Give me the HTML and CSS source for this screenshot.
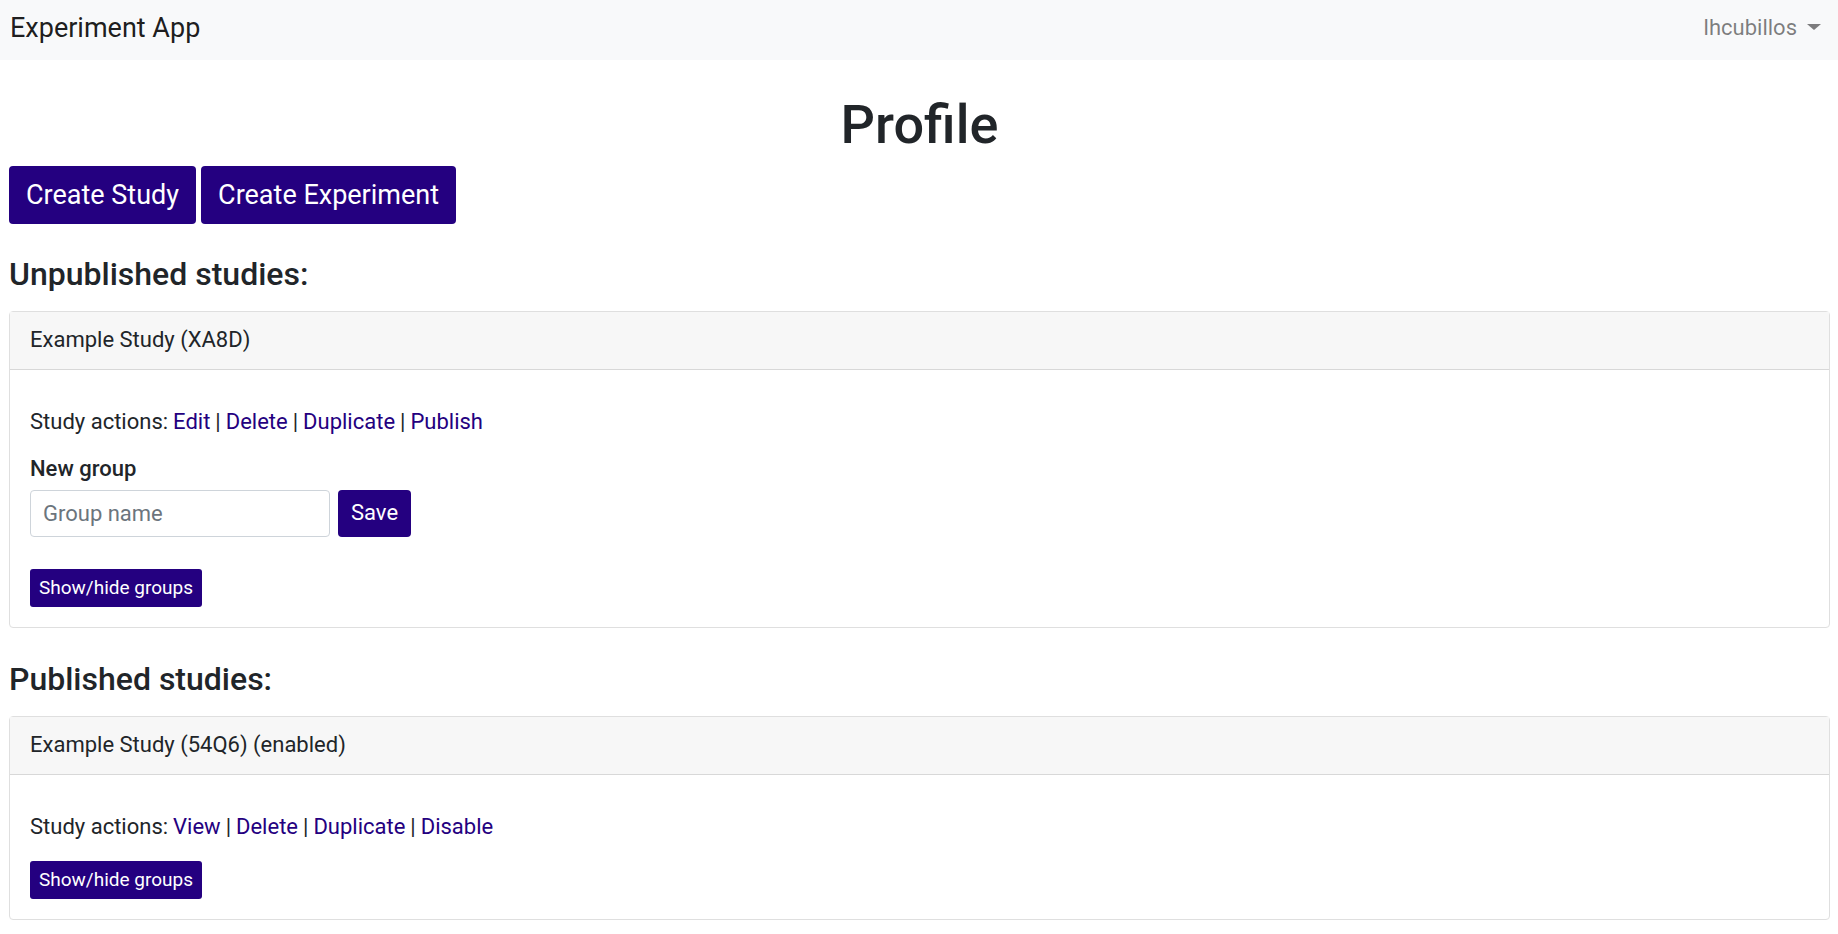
FILE: index.html
```html
<!DOCTYPE html>
<html lang="en">
<head>
<meta charset="utf-8">
<title>Experiment App</title>
<link rel="stylesheet" href="styles.css">
</head>
<body>
<nav class="navbar">
  <a class="brand" href="#">Experiment App</a>
  <button class="user-menu" type="button">lhcubillos<span class="caret"></span></button>
</nav>
<main class="page">
  <h1 class="title">Profile</h1>
  <div class="toolbar">
    <button class="btn btn-lg" type="button">Create Study</button>
    <button class="btn btn-lg" type="button">Create Experiment</button>
  </div>

  <section class="section">
    <h2 class="section-title">Unpublished studies:</h2>
    <article class="card">
      <header class="card-header">Example Study (XA8D)</header>
      <div class="card-body">
        <div class="actions">
          <span>Study actions:</span>
          <a class="link" href="#">Edit</a><span class="bar">|</span>
          <button class="link" type="button">Delete</button><span class="bar">|</span>
          <button class="link" type="button">Duplicate</button><span class="bar">|</span>
          <button class="link" type="button">Publish</button>
        </div>
        <form class="group-form">
          <label class="label" for="group-name">New group</label>
          <div class="field-row">
            <input class="input" id="group-name" type="text" placeholder="Group name">
            <button class="btn" type="button">Save</button>
          </div>
        </form>
        <button class="btn btn-sm" type="button">Show/hide groups</button>
      </div>
    </article>
  </section>

  <section class="section">
    <h2 class="section-title">Published studies:</h2>
    <article class="card">
      <header class="card-header">Example Study (54Q6) (enabled)</header>
      <div class="card-body">
        <div class="actions">
          <span>Study actions:</span>
          <a class="link" href="#">View</a><span class="bar">|</span>
          <button class="link" type="button">Delete</button><span class="bar">|</span>
          <button class="link" type="button">Duplicate</button><span class="bar">|</span>
          <button class="link" type="button">Disable</button>
        </div>
        <button class="btn btn-sm" type="button">Show/hide groups</button>
      </div>
    </article>
  </section>
</main>
</body>
</html>
```
FILE: styles.css
```css
* { box-sizing: border-box; }

body {
  margin: 0;
  background: #fff;
  color: #212529;
  font-family: Roboto, "Liberation Sans", sans-serif;
  font-size: 22px;
  line-height: 32px;
}

button, input { font: inherit; }
button { cursor: pointer; }

.navbar {
  display: flex;
  align-items: center;
  justify-content: space-between;
  min-height: 60px;
  padding: 0 17px 4px 10px;
  background: #f8f9fa;
}

.brand {
  color: rgba(0, 0, 0, .9);
  font-size: 27px;
  text-decoration: none;
}

.user-menu {
  display: flex;
  align-items: center;
  gap: 10px;
  padding: 0;
  border: 0;
  background: none;
  color: rgba(0, 0, 0, .5);
}

.caret {
  margin-bottom: 3px;
  border: 7px solid transparent;
  border-top: 6px solid currentColor;
  border-bottom: 0;
}

.page { padding: 33px 8px 0 9px; }

.title {
  margin: 0 0 9px;
  font-size: 54px;
  font-weight: 500;
  line-height: 64px;
  text-align: center;
}

.toolbar { display: flex; gap: 5px; }

.btn {
  padding: 7px 13px 9px;
  border: 0;
  border-radius: 4px;
  background: #240080;
  color: #fff;
  line-height: 31px;
}

.btn-lg {
  padding: 9px 17px;
  font-size: 27px;
  line-height: 40px;
}

.btn-sm {
  padding: 5px 9px;
  border-radius: 3px;
  font-size: 19px;
  line-height: 28px;
}

.section { margin: 30px 0 31px; }
.section:last-child { margin-bottom: 12px; }

.section-title {
  margin: 0 0 17px;
  font-size: 32px;
  font-weight: 500;
  line-height: 40px;
}

.card {
  border: 1px solid #dfdfdf;
  border-radius: 4px;
}

.card-header {
  padding: 12px 20px 13px;
  border-bottom: 1px solid #d8d8d8;
  background: #f7f7f7;
}

.card-body {
  display: flex;
  flex-direction: column;
  align-items: flex-start;
  padding: 36px 20px 20px;
}

.actions {
  display: flex;
  gap: 5px;
  margin-bottom: 18px;
}

.link {
  padding: 0;
  border: 0;
  background: none;
  color: #240080;
  text-decoration: none;
}

.group-form {
  margin-top: -3px;
  margin-bottom: 32px;
}

.label {
  display: block;
  margin-bottom: 5px;
  font-weight: 500;
}

.field-row { display: flex; gap: 8px; }

.input {
  width: 300px;
  padding: 0 12px;
  border: 1px solid #ced4da;
  border-radius: 4px;
  background: #fff;
  color: #495057;
}

.input::placeholder { color: #6c757d; opacity: 1; }
```
